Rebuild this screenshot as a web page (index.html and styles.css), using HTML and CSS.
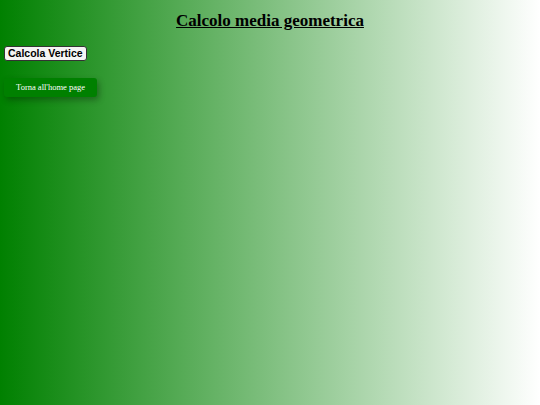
FILE: index.html
```html
<!DOCTYPE html>
<html lang="it">
<head>
<meta charset="utf-8">
<title>Calcolo media geometrica</title>
<link rel="stylesheet" href="styles.css">
</head>
<body>
<h1 class="title">Calcolo media geometrica</h1>
<button class="calc-btn">Calcola Vertice</button>
<div class="home-row">
  <a class="home-btn" href="#">Torna all'home page</a>
</div>
</body>
</html>
```
FILE: styles.css
```css
html, body {
  margin: 0;
  height: 100%;
}
body {
  background: linear-gradient(to right, #008000, #ffffff);
  font-family: "Liberation Serif", serif;
  padding: 11px 4px 0;
  box-sizing: border-box;
}
.title {
  margin: 0 0 15px;
  text-align: center;
  font-size: 17px;
  font-weight: bold;
  text-decoration: underline;
  color: #000;
  line-height: 20px;
}
.calc-btn {
  display: block;
  margin: 0;
  padding: 0 3px;
  height: 15px;
  font-family: "Liberation Sans", sans-serif;
  font-weight: bold;
  font-size: 10.5px;
  line-height: 13px;
  background: #f4f4f4;
  color: #000;
  border: 1px solid #333;
  border-radius: 3px;
}
.home-row {
  margin-top: 17px;
}
.home-btn {
  display: inline-block;
  vertical-align: top;
  width: 93px;
  height: 19px;
  line-height: 19px;
  text-align: center;
  background: #008000;
  color: #fff;
  font-size: 8.5px;
  text-decoration: none;
  border-radius: 3px;
  box-shadow: 2px 3px 6px rgba(0, 0, 0, 0.3);
}
```
